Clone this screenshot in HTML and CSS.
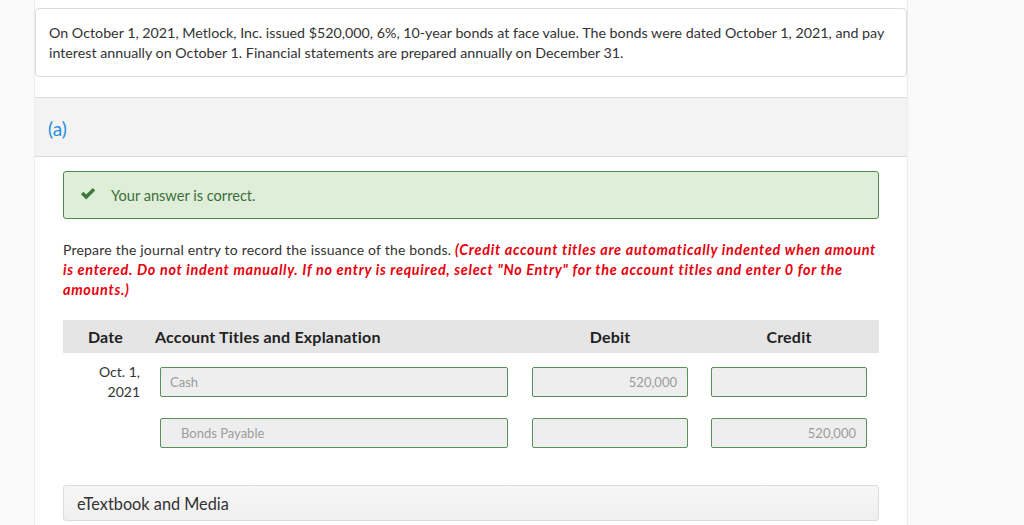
FILE: index.html
```html
<!DOCTYPE html>
<html>
<head>
<meta charset="utf-8">
<link rel="stylesheet" href="styles.css">
</head>
<body>
<div class="page">
  <div class="gutter"></div>
  <main class="main">
    <div class="card">
      On October 1, 2021, Metlock, Inc. issued $520,000, 6%, 10-year bonds at face value. The bonds were dated October 1, 2021, and pay interest annually on October 1. Financial statements are prepared annually on December 31.
    </div>
    <section class="panel">
      <div class="panel-head">(a)</div>
      <div class="panel-body">
        <div class="alert">
          <svg class="check" width="16" height="13" viewBox="0 0 16 13"><path d="M1 7.2 L3.4 4.8 L6.2 7.6 L12.8 1 L15.2 3.4 L6.2 12.4 Z" fill="#3e7a3e"/></svg>
          <span>Your answer is correct.</span>
        </div>
        <p class="prompt">Prepare the journal entry to record the issuance of the bonds. <em>(Credit account titles are automatically indented when amount is entered. Do not indent manually. If no entry is required, select "No Entry" for the account titles and enter 0 for the amounts.)</em></p>
        <div class="journal">
          <div class="jhead">
            <div class="h-date">Date</div>
            <div class="h-acct">Account Titles and Explanation</div>
            <div class="h-num">Debit</div>
            <div class="h-num">Credit</div>
          </div>
          <div class="jrow">
            <div class="c-date">Oct. 1,<br>2021</div>
            <div class="c-acct"><div class="field">Cash</div></div>
            <div class="c-deb"><div class="field num">520,000</div></div>
            <div class="c-cred"><div class="field num"></div></div>
          </div>
          <div class="jrow">
            <div class="c-date"></div>
            <div class="c-acct"><div class="field indent">Bonds Payable</div></div>
            <div class="c-deb"><div class="field num"></div></div>
            <div class="c-cred"><div class="field num">520,000</div></div>
          </div>
        </div>
        <div class="media">eTextbook and Media</div>
      </div>
    </section>
  </main>
  <div class="rightside"></div>
</div>
</body>
</html>
```

FILE: styles.css
```css
html, body {
  margin: 0;
  padding: 0;
  height: 100%;
}
body {
  background: #fafafa;
  font-family: Lato, "Open Sans", sans-serif;
  color: #333;
  overflow: hidden;
}
.page {
  display: flex;
  height: 525px;
}
.gutter {
  width: 34px;
  border-right: 1px solid #ececec;
  background: #fafafa;
  flex: none;
}
.main {
  width: 872px;
  flex: none;
  background: #fff;
  padding-top: 8px;
  box-sizing: border-box;
}
.rightside {
  flex: 1;
  background: #fafafa;
  border-left: 1px solid #ececec;
}
.card {
  border: 1px solid #dcdcdc;
  border-radius: 4px;
  padding: 14px 14px 14px 13px;
  font-size: 14.25px;
  line-height: 19.5px;
  color: #333;
}
.panel {
  margin-top: 20px;
}
.panel-head {
  background: #f3f3f3;
  border-top: 1px solid #dcdcdc;
  border-bottom: 1px solid #dcdcdc;
  height: 60px;
  display: flex;
  align-items: center;
  padding-left: 13px;
  padding-top: 2px;
  box-sizing: border-box;
  font-size: 19px;
  color: #1f8fdc;
}
.panel-body {
  padding: 14px 28px 0 28px;
}
.alert {
  display: flex;
  align-items: center;
  height: 48px;
  box-sizing: border-box;
  background: #dfeed8;
  border: 1px solid #4e8a4e;
  border-radius: 3px;
  padding-left: 16px;
  font-size: 14.6px;
  color: #3d6f3d;
}
.check {
  margin-right: 15px;
  margin-top: -3px;
}
.prompt {
  margin: 21px -6px 0 0;
  font-size: 14px;
  letter-spacing: 0.2px;
  line-height: 20px;
  color: #333;
}
.prompt em {
  color: #e8000b;
  font-size: 14.4px;
  font-weight: bold;
  font-style: italic;
  letter-spacing: 0.7px;
}
.journal {
  margin-top: 20px;
}
.jhead, .jrow {
  display: grid;
  grid-template-columns: 85px 372px 180px 178px;
}
.jhead {
  background: #e5e5e5;
  height: 33px;
  align-items: center;
  font-size: 16px;
  letter-spacing: 0.2px;
  font-weight: bold;
  color: #222;
}
.h-date {
  text-align: center;
}
.h-acct {
  padding-left: 7px;
}
.h-num {
  text-align: center;
}
.jrow {
  height: 51px;
  align-items: start;
}
.jhead + .jrow {
  margin-top: 14px;
}
.c-date {
  text-align: right;
  padding-right: 8px;
  font-size: 14px;
  line-height: 20px;
  margin-top: -5px;
  color: #333;
}
.c-acct {
  padding: 0 12px;
}
.c-deb {
  padding: 0 12px;
}
.c-cred {
  padding: 0 11px;
}
.field {
  height: 30px;
  box-sizing: border-box;
  background: #eeeeee;
  border: 1px solid #5a8f5a;
  border-radius: 2px;
  font-size: 13px;
  color: #9c9c9c;
  display: flex;
  align-items: center;
  padding: 0 10px 0 9px;
}
.field.indent {
  padding-left: 20px;
}
.field.num {
  justify-content: flex-end;
}
.media {
  margin-top: 16px;
  height: 36px;
  box-sizing: border-box;
  border: 1px solid #dcdcdc;
  border-radius: 3px;
  background: linear-gradient(#f7f7f7, #efefef);
  display: flex;
  align-items: center;
  padding-left: 13px;
  font-size: 16.3px;
  color: #333;
}
```
